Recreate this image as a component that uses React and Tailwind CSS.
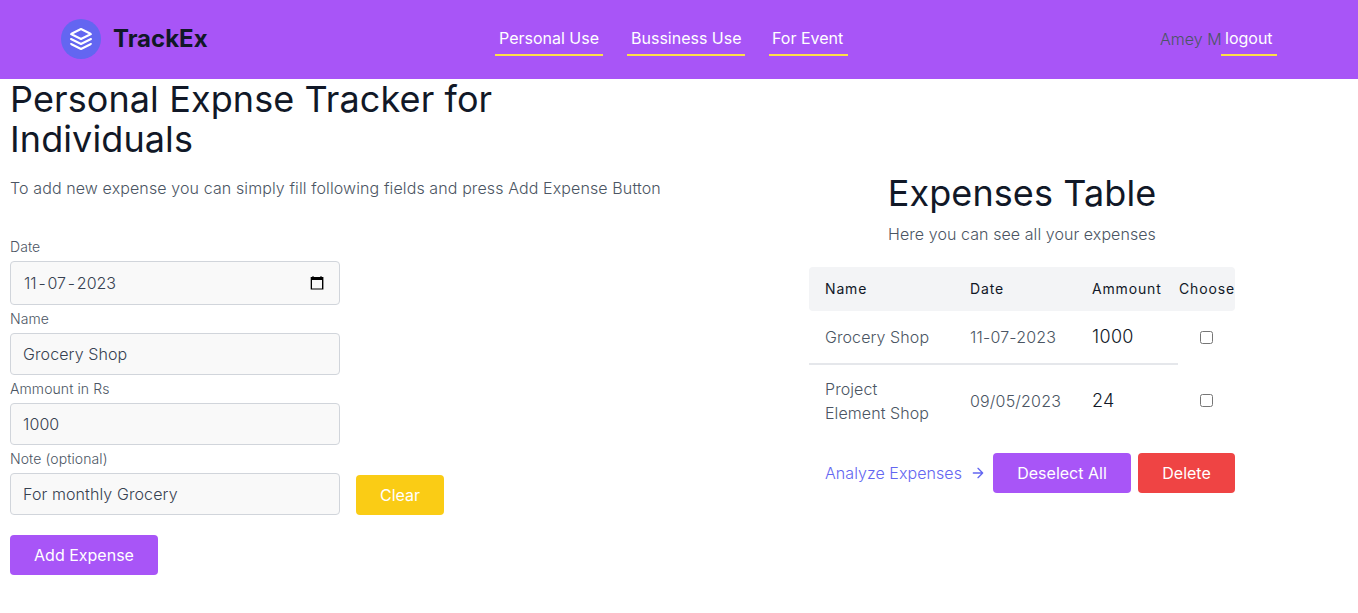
const field =
  "w-[330px] rounded border border-[#d1d5db] bg-[#f9f9f9] px-3 py-2 text-base leading-6 font-[350] tracking-[0.1px] text-[#374151] outline-none";

function Logo() {
  return (
    <span className="flex items-center">
      <svg viewBox="0 0 24 24" className="h-10 w-10 rounded-full bg-[#6366f1] p-2 text-white" fill="none" stroke="currentColor" strokeWidth="2" strokeLinecap="round" strokeLinejoin="round">
        <path d="M12 2L2 7l10 5 10-5-10-5zM2 17l10 5 10-5M2 12l10 5 10-5" />
      </svg>
      <span className="ml-3 text-2xl leading-7 font-bold text-[#111827]">TrackEx</span>
    </span>
  );
}

function Field({ label, value, children }) {
  return (
    <label className="block">
      <span className="block h-7 text-sm leading-7 font-[350] tracking-[0.09px]">{label}</span>
      {children || <input className={"block h-[42px] " + field} defaultValue={value} />}
    </label>
  );
}

function Row({ name, date, amount, last }) {
  const line = last ? "" : "border-b-2 border-[#e5e7eb] ";
  return (
    <tr className={last ? "h-[72px]" : "h-[54px]"}>
      <td className={line + "px-4 tracking-[0.08px]"}>{name}</td>
      <td className={line + "px-4 tracking-[0.18px]"}>{date}</td>
      <td className={line + "px-4 text-lg tracking-[0.35px] text-[#111827]"}>{amount}</td>
      <td>
        <input type="checkbox" className={(last ? "mb-[2px] " : "mb-px ") + "mx-auto block h-[13px] w-[13px]"} />
      </td>
    </tr>
  );
}

export default function App() {
  return (
    <div className="h-[613px] w-[1358px] overflow-hidden bg-white font-['Inter',sans-serif] text-base text-[#4b5563]">
      <header className="flex h-[79px] items-center bg-[#a855f7] pb-[2px] pl-[61px]">
        <div className="w-[434px]"><Logo /></div>
        <nav className="flex w-[665px] gap-6 text-white">
          <a className="w-[108px] border-b-2 border-[#fde047] px-1 pt-1 pb-1 whitespace-nowrap">Personal Use</a>
          <a className="w-[118px] border-b-2 border-[#fde047] px-1 pt-1 pb-1 whitespace-nowrap">Bussiness Use</a>
          <a className="w-[79px] border-b-2 border-[#fde047] px-[3px] pt-1 pb-1 whitespace-nowrap">For Event</a>
        </nav>
        <div className="flex whitespace-nowrap">
          <span className="w-[61px] pt-[5px] font-[350] tracking-[0.05px]">Amey M</span>
          <a className="w-14 border-b-2 border-[#fde047] px-1 pt-1 pb-1 text-white">logout</a>
        </div>
      </header>
      <main className="flex">
        <section className="w-[809px] pl-[10px]">
          <h1 className="w-[520px] text-4xl leading-10 tracking-[0.1px] text-[#111827]">Personal Expnse Tracker for Individuals</h1>
          <p className="mt-[17px] leading-6 font-[350] tracking-[0.11px]">To add new expense you can simply fill following fields and press Add Expense Button</p>
          <form className="mt-[33px]">
            <Field label="Date">
              <span className={"flex h-11 items-center justify-between pr-[15px] " + field}>
                <span className="flex tracking-normal">
                  <span className="px-px">11</span>
                  <span className="px-[0.8px]">-</span>
                  <span className="px-px">07</span>
                  <span className="px-[0.8px]">-</span>
                  <span className="px-px">2023</span>
                </span>
                <svg width="14" height="14" viewBox="0 0 14 14" className="text-black" fill="currentColor">
                  <path fillRule="evenodd" d="M2.5 0h1v1h7V0h1v1h1.9v12.6H.7V1h1.8zM2 4v8.4h10V4z" />
                </svg>
              </span>
            </Field>
            <Field label="Name" value="Grocery Shop" />
            <Field label="Ammount in Rs" value="1000" />
            <div className="flex items-end gap-4">
              <Field label="Note (optional)" value="For monthly Grocery" />
              <button type="button" className="h-10 w-[88px] rounded bg-[#facc15] text-white">Clear</button>
            </div>
            <button type="button" className="mt-5 h-10 w-[148px] rounded bg-[#a855f7] text-white">Add Expense</button>
          </form>
        </section>
        <section className="w-[426px] pt-[94px]">
          <h2 className="text-center text-4xl leading-10 tracking-[0.1px] text-[#111827]">Expenses Table</h2>
          <p className="mt-[9px] text-center leading-6 font-[350] tracking-[0.07px]">Here you can see all your expenses</p>
          <table className="mt-[21px] w-[426px] table-fixed border-separate border-spacing-0 text-left font-[350]">
            <colgroup>
              <col className="w-[145px]" />
              <col className="w-[122px]" />
              <col className="w-[102px]" />
              <col className="w-[57px]" />
            </colgroup>
            <thead>
              <tr className="h-11 bg-[#f3f4f6] text-sm tracking-[0.85px] text-[#111827]">
                <th className="rounded-l px-4 font-normal">Name</th>
                <th className="px-4 font-normal">Date</th>
                <th className="px-4 font-normal">Ammount</th>
                <th className="rounded-r pl-px font-normal">Choose</th>
              </tr>
            </thead>
            <tbody>
              <Row name="Grocery Shop" date="11-07-2023" amount="1000" />
              <Row name="Project Element Shop" date="09/05/2023" amount="24" last />
            </tbody>
          </table>
          <div className="mt-4 flex items-center pl-4">
            <a className="flex w-[168px] items-center font-[350] tracking-[0.06px] text-[#6366f1]">
              Analyze Expenses
              <svg viewBox="0 0 24 24" className="ml-2 h-4 w-4" fill="none" stroke="currentColor" strokeWidth="2" strokeLinecap="round" strokeLinejoin="round">
                <path d="M5 12h14M12 5l7 7-7 7" />
              </svg>
            </a>
            <button className="h-10 w-[138px] rounded bg-[#a855f7] text-white">Deselect All</button>
            <button className="ml-[7px] h-10 w-[97px] rounded bg-[#ef4444] text-white">Delete</button>
          </div>
        </section>
      </main>
    </div>
  );
}
